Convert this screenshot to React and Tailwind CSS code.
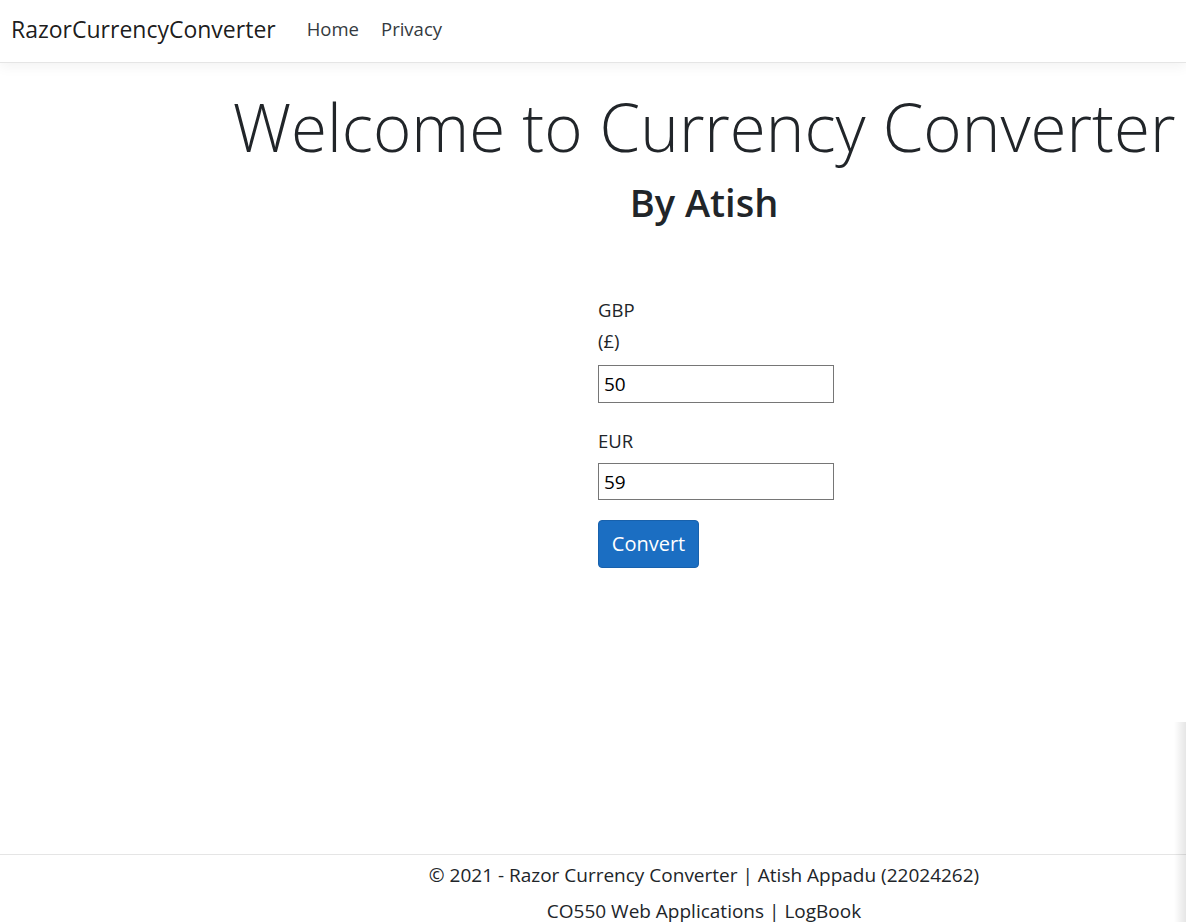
import React, { useState } from 'react';

const App = () => {
  const [gbp, setGbp] = useState('50');
  const [eur, setEur] = useState('59');

  return (
    <div
      className="relative h-[922px] overflow-hidden bg-white text-[#212529]"
      style={{ fontFamily: '"Open Sans", "Noto Sans", sans-serif' }}
    >
      <header className="h-[63px] border-b border-[#e5e5e5] bg-white shadow-[0_4px_12px_rgba(0,0,0,0.05)]">
        <nav className="flex h-full items-center pb-[4px] pl-[11px]">
          <a className="text-[23px] text-black/90">RazorCurrencyConverter</a>
          <ul className="ml-[31px] flex gap-[22px] text-[18.5px] text-[#343a40]">
            <li>Home</li>
            <li>Privacy</li>
          </ul>
        </nav>
      </header>

      <main className="h-[791px] pl-[222px] pt-[26px]">
        <div className="text-center">
          <h1 className="whitespace-nowrap text-[65.5px] font-light leading-[76px]">
            Welcome to Currency Converter
          </h1>
          <h3 className="mt-[11px] text-[38px] font-semibold leading-[52px]">By Atish</h3>
        </div>

        <form className="ml-[376px] mt-[66px] w-[236px] text-[18.5px]">
          <label className="block leading-[31px]">
            GBP
            <br />
            (£)
          </label>
          <input
            className="mt-[9px] block h-[38px] w-[236px] border border-[#767676] px-[5px] text-[19px] text-black outline-none"
            value={gbp}
            onChange={(e) => setGbp(e.target.value)}
          />
          <label className="mt-[22px] block leading-[31px]">EUR</label>
          <input
            className="mt-[7px] block h-[37px] w-[236px] border border-[#767676] px-[5px] text-[19px] text-black outline-none"
            value={eur}
            onChange={(e) => setEur(e.target.value)}
          />
          <button
            type="button"
            className="mt-[20px] h-[48px] w-[101px] rounded-[4px] border border-[#1861ac] bg-[#1b6ec2] text-[20px] text-white"
          >
            Convert
          </button>
        </form>
      </main>

      <footer className="h-[68px] border-t border-[#e5e5e5] pl-[222px] pt-[2px] text-center text-[19px] leading-[36px]">
        <div>© 2021 - Razor Currency Converter | Atish Appadu (22024262)</div>
        <div>CO550 Web Applications | LogBook</div>
      </footer>

      <div className="pointer-events-none absolute bottom-0 right-0 h-[200px] w-[12px] bg-gradient-to-l from-black/10 to-transparent" />
    </div>
  );
};

export default App;
